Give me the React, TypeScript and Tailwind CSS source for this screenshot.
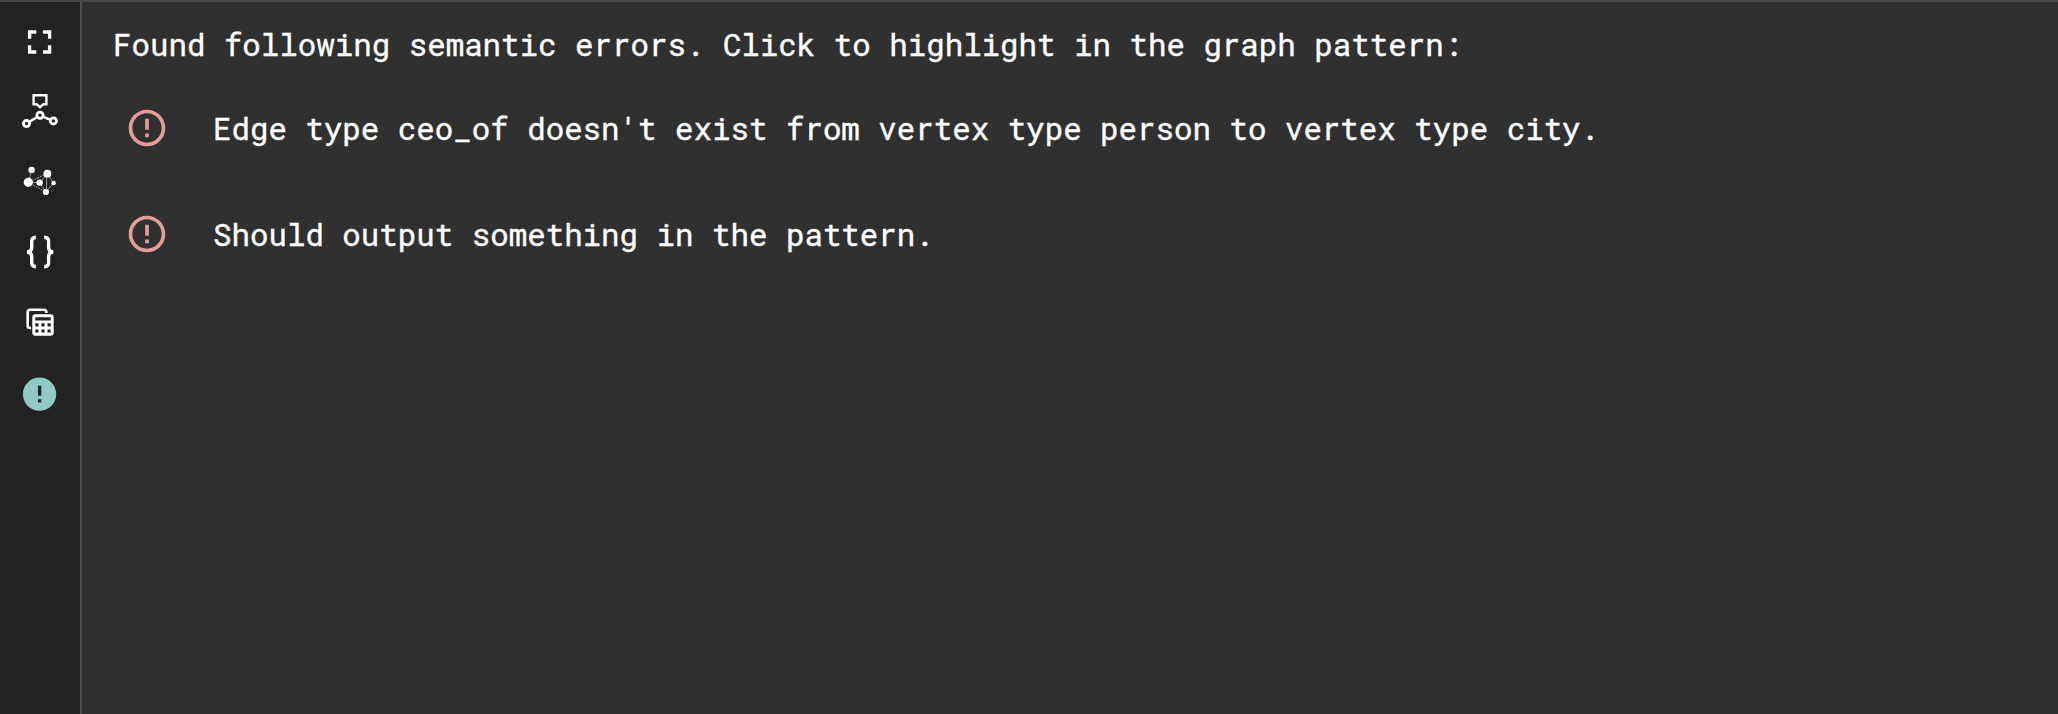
import type { ReactNode } from "react";

function ToolButton({ label, viewBox, children }: { label: string; viewBox: string; children: ReactNode }) {
  return (
    <button type="button" aria-label={label} className="block h-[70px] w-20">
      <svg viewBox={viewBox} className="h-[70px] w-20" fill="none">
        {children}
      </svg>
    </button>
  );
}

function Sidebar() {
  return (
    <nav className="flex w-[82px] shrink-0 flex-col border-r-2 border-[#4f4f4f] bg-[#222222] pt-[5px]">
      <ToolButton label="Fullscreen" viewBox="0 7 80 70">
        <path transform="translate(19.6 22) scale(1.6667)" fill="#fff" d="M7 14H5v5h5v-2H7v-3zm-2-4h2V7h3V5H5v5zm12 7h-3v2h5v-5h-2v3zM14 5v2h3v3h2V5h-5z" />
      </ToolButton>
      <ToolButton label="Pattern" viewBox="0 77 80 70">
        <g stroke="#fff">
          <path d="M33.6 95.2H46.4V104.3H43.3L40 107.2L36.7 104.3H33.6Z" strokeWidth="2.4" />
          <path d="M29.3 121.9L37.3 117M42.9 116.6L50.3 119.8" strokeWidth="2.6" />
          <circle cx="26.5" cy="123.6" r="3.1" strokeWidth="2.8" />
          <circle cx="40" cy="115.3" r="3.1" strokeWidth="2.8" />
          <circle cx="53.4" cy="120.9" r="3.1" strokeWidth="2.8" />
        </g>
      </ToolButton>
      <ToolButton label="Graph" viewBox="0 147 80 70">
        <g stroke="#fff" strokeWidth="0.7" opacity="0.8">
          <path d="M31.7 170L28.3 182.3L39.7 182.7L47.3 173.7L53.6 183L45.8 192M46.4 192L46.8 173.7" />
          <path d="M39.7 182.7L45.8 192M28.3 182.3L45.8 192M46.8 173.7L28.3 182.3" strokeDasharray="2 0.8" />
        </g>
        <g fill="#fff">
          <circle cx="31.6" cy="169.9" r="3.2" />
          <circle cx="47.4" cy="173.7" r="3.9" />
          <circle cx="28.3" cy="182.3" r="4.6" />
          <circle cx="39.7" cy="182.6" r="3.2" />
          <circle cx="53.6" cy="183" r="2.3" />
          <circle cx="45.9" cy="192" r="3.1" />
        </g>
      </ToolButton>
      <ToolButton label="JSON" viewBox="0 217 80 70">
        <g stroke="#fff" strokeWidth="3.4">
          <path d="M35.8 237.3C32.9 237.5 31.7 239 31.7 241.6V247.2C31.7 250 30.4 251.5 27.2 252C30.4 252.5 31.7 254 31.7 256.8V262.4C31.7 265 32.9 266.5 35.8 266.7" />
          <path d="M44.2 237.3C47.1 237.5 48.6 239 48.6 241.6V247.2C48.6 250 49.9 251.5 53.1 252C49.9 252.5 48.6 254 48.6 256.8V262.4C48.6 265 47.1 266.5 44.2 266.7" />
        </g>
      </ToolButton>
      <ToolButton label="Table" viewBox="0 287 80 70">
        <path stroke="#fff" strokeWidth="2.6" d="M31 328H30C28.6 328 27.7 327.1 27.7 325.7V312C27.7 310.6 28.6 309.7 30 309.7H44C45.4 309.7 46.3 310.6 46.3 312V313" />
        <path
          fill="#fff"
          fillRule="evenodd"
          d="M35.3 314.3H50.7A3 3 0 0 1 53.7 317.3V332.7A3 3 0 0 1 50.7 335.7H35.3A3 3 0 0 1 32.3 332.7V317.3A3 3 0 0 1 35.3 314.3ZM35.3 317.3V320.4H50.7V317.3ZM35.3 323.3V326.5H38.5V323.3ZM41.4 323.3V326.5H44.6V323.3ZM47.5 323.3V326.5H50.7V323.3ZM35.3 329.4V332.6H38.5V329.4ZM41.4 329.4V332.6H44.6V329.4ZM47.5 329.4V332.6H50.7V329.4Z"
        />
      </ToolButton>
      <ToolButton label="Errors" viewBox="0 357 80 70">
        <path transform="translate(19.6 374.2) scale(1.6667)" fill="#90cac4" d="M12 2C6.48 2 2 6.48 2 12s4.48 10 10 10 10-4.48 10-10S17.52 2 12 2zm1 15h-2v-2h2v2zm0-4h-2V7h2v6z" />
      </ToolButton>
    </nav>
  );
}

function ErrorRow({ children }: { children: ReactNode }) {
  return (
    <li className="flex h-[106px] items-start">
      <svg viewBox="0 0 24 24" className="mt-[31px] h-11 w-11 shrink-0" fill="#e59d9a">
        <path d="M11 15h2v2h-2zm0-8h2v6h-2zm.99-5C6.47 2 2 6.48 2 12s4.47 10 9.99 10C17.52 22 22 17.52 22 12S17.52 2 11.99 2zM12 20c-4.42 0-8-3.58-8-8s3.58-8 8-8 8 3.58 8 8-3.58 8-8 8z" />
      </svg>
      <span className="ml-11 mt-[31px] whitespace-pre leading-[44px]">{children}</span>
    </li>
  );
}

export default function App() {
  return (
    <div className="flex h-[714px] w-full overflow-hidden border-t-2 border-[#484848] bg-[#303030] font-['Roboto_Mono','Liberation_Mono',monospace] text-[30.8px] text-white [-webkit-text-stroke:0.4px_white]">
      <Sidebar />
      <main className="flex-1 pl-[31px]">
        <p className="mt-5 whitespace-pre leading-[44px]">
          Found following semantic errors. Click to highlight in the graph pattern:
        </p>
        <ul className="mt-[9px] pl-[12px]">
          <ErrorRow>Edge type ceo_of doesn't exist from vertex type person to vertex type city.</ErrorRow>
          <ErrorRow>Should output something in the pattern.</ErrorRow>
        </ul>
      </main>
    </div>
  );
}
